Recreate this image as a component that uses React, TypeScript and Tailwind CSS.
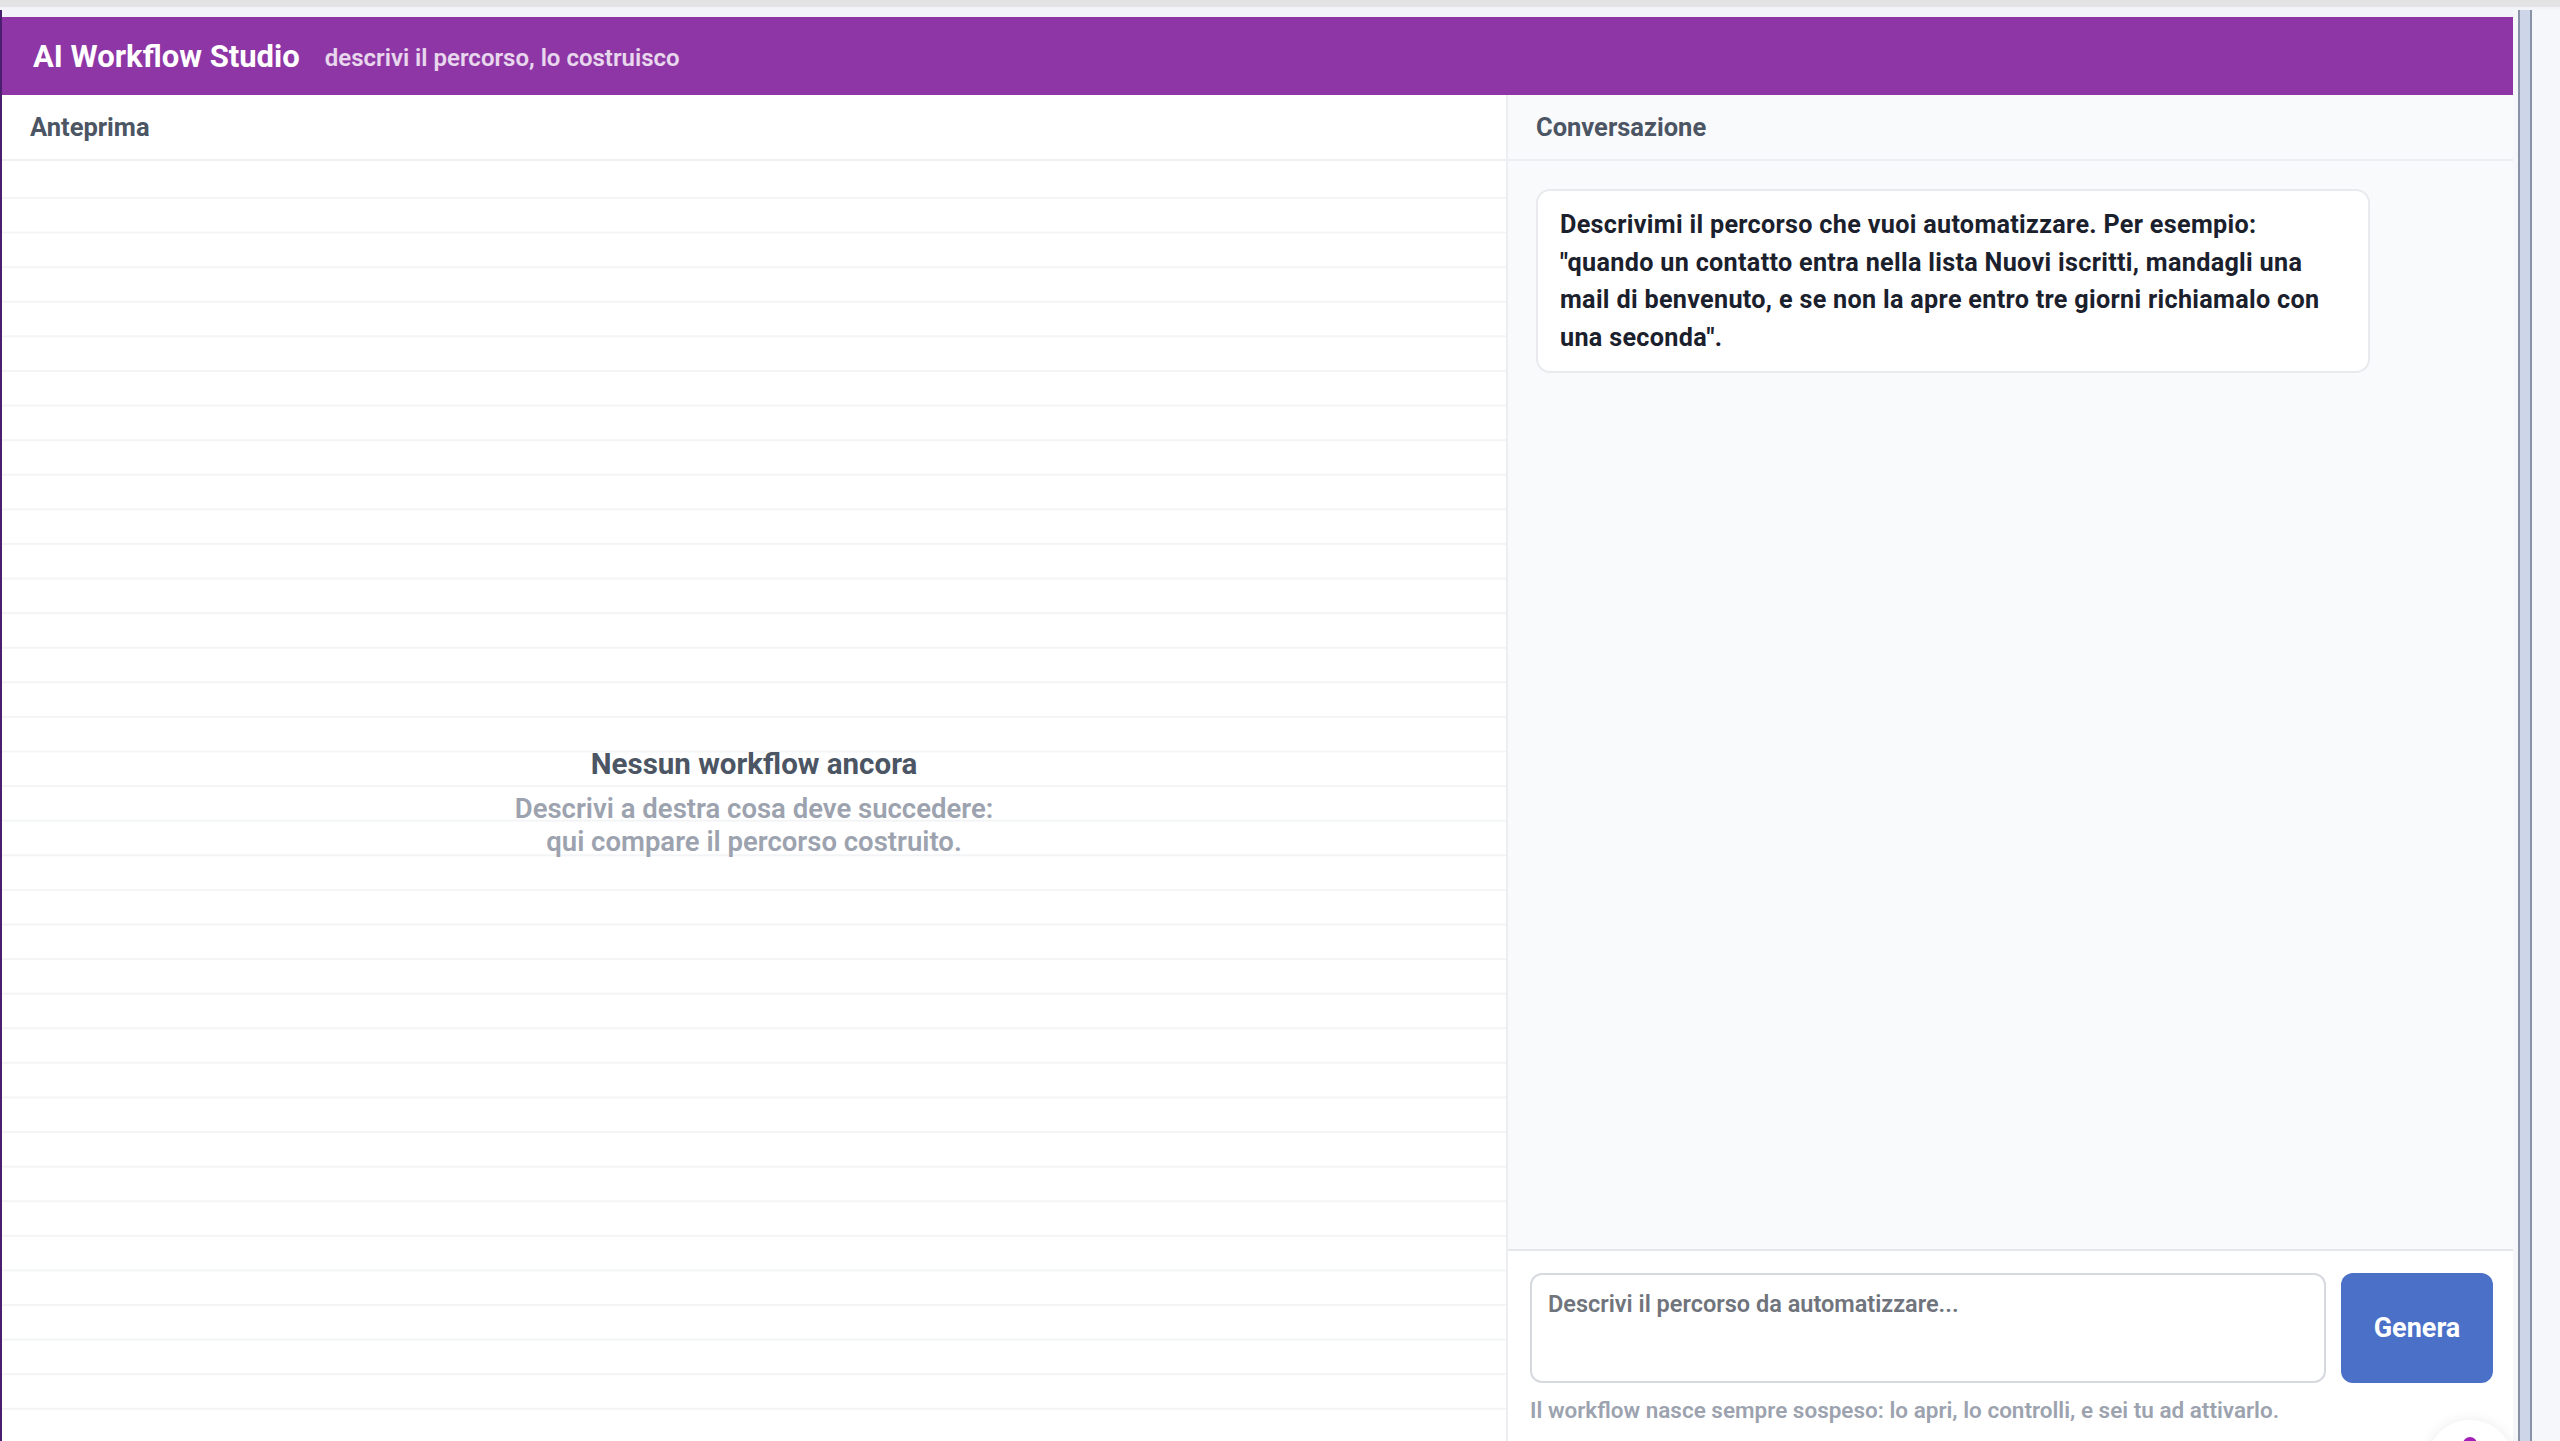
import React from "react";

export default function App() {
  return (
    <div className="relative h-[1441px] w-[2560px] overflow-hidden bg-[#f6f7fb] font-['Roboto','Noto_Sans',sans-serif]">
      <div className="h-[7px] bg-[#e3e3e3]" />
      <div className="h-[3px] bg-[#f3f4f9]" />
      <div className="flex h-[1431px]">
        {/* App frame */}
        <div className="flex w-[2513px] flex-col border-l-2 border-[#4a1e6e]">
          <div className="h-[7px] bg-[#f3f4f9]" />
          <header className="flex h-[78px] items-center gap-[25px] bg-[#8e36a6] pl-[31px]">
            <h1 className="text-[31px] font-bold leading-none text-white">AI Workflow Studio</h1>
            <span className="pt-[3px] text-[24px] font-semibold leading-none text-white/80">
              descrivi il percorso, lo costruisco
            </span>
          </header>
          <div className="flex min-h-0 flex-1">
            {/* Preview */}
            <section className="flex w-[1506px] flex-col border-r-2 border-[#eceef2] bg-white">
              <div className="flex h-[66px] items-center border-b-2 border-[#eef0f3] px-[28px]">
                <h2 className="text-[25.5px] font-bold text-[#4b5563]">Anteprima</h2>
              </div>
              <div className="flex flex-1 flex-col items-center justify-center bg-[linear-gradient(to_bottom,transparent_0,transparent_32.6px,#f3f4f6_32.6px,#f3f4f6_34.6px)] bg-[length:100%_34.6px] bg-[position:0_3.4px] bg-clip-content pt-[4px] pb-[2px]">
                <p className="text-[29.5px] font-bold leading-[36px] text-[#4b5563]">Nessun workflow ancora</p>
                <p className="mt-[10px] text-center text-[27.5px] font-semibold leading-[33px] text-[#9ca3af]">
                  Descrivi a destra cosa deve succedere:
                  <br />
                  qui compare il percorso costruito.
                </p>
              </div>
            </section>
            {/* Conversation */}
            <section className="flex flex-1 flex-col bg-[#f9fafc]">
              <div className="flex h-[66px] items-center border-b-2 border-[#eceef2] px-[28px]">
                <h2 className="text-[25.5px] font-bold text-[#4b5563]">Conversazione</h2>
              </div>
              <div className="flex-1 p-[28px]">
                <div className="w-[834px] rounded-[14px] border-2 border-[#e8eaee] bg-white px-[22px] py-[15px]">
                  <p className="whitespace-nowrap text-[25.2px] font-bold leading-[37.5px] tracking-[0.012em] text-[#1a202c]">
                    Descrivimi il percorso che vuoi automatizzare. Per esempio:
                    <br />
                    "quando un contatto entra nella lista Nuovi iscritti, mandagli una
                    <br />
                    mail di benvenuto, e se non la apre entro tre giorni richiamalo con
                    <br />
                    una seconda".
                  </p>
                </div>
              </div>
              <div className="h-[192px] border-t-2 border-[#e5e7eb] bg-white pl-[22px] pr-[20px] pt-[22px]">
                <div className="flex gap-[15px]">
                  <textarea
                    className="h-[110px] flex-1 resize-none rounded-[12px] border-2 border-[#d6d9df] bg-white px-[16px] pb-[12px] pt-[11px] text-[23.5px] font-semibold leading-[36px] text-[#374151] outline-none placeholder:text-[#70747c]"
                    placeholder="Descrivi il percorso da automatizzare..."
                  />
                  <button className="h-[110px] w-[152px] rounded-[12px] bg-[#4a70c8] text-[27px] font-bold text-white">
                    Genera
                  </button>
                </div>
                <p className="mt-[13px] text-[22.5px] font-semibold leading-[28px] text-[#9ca3af]">
                  Il workflow nasce sempre sospeso: lo apri, lo controlli, e sei tu ad attivarlo.
                </p>
              </div>
            </section>
          </div>
        </div>
        <div className="w-[5px]" />
        {/* scrollbar */}
        <div className="w-[14px] border-x-2 border-[#8a93a6] bg-[#cdd5e9]" />
        <div className="flex-1" />
      </div>
      {/* floating widget */}
      <div className="absolute left-[2426px] top-[1420px] flex h-[88px] w-[88px] justify-center rounded-full bg-white shadow-[0_0_14px_rgba(0,0,0,0.08)]">
        <div className="mt-[17px] h-[14px] w-[14px] rounded-full bg-[#a41fb8]" />
      </div>
    </div>
  );
}
